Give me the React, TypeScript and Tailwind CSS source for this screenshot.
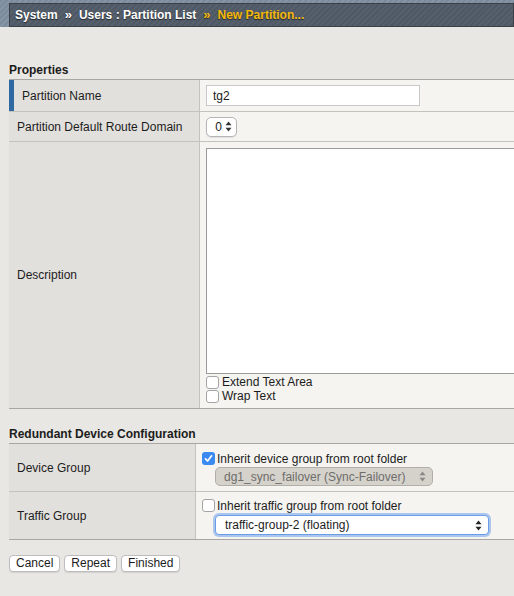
import React from "react";

const font = { fontFamily: '"Liberation Sans", Arial, Helvetica, sans-serif' };

function Arrows({ className = "" }: { className?: string }) {
  return (
    <svg width="7" height="11" viewBox="0 0 7 11" className={className}>
      <path d="M3.5 0.5 L6.5 4.3 L0.5 4.3 Z" fill="currentColor" />
      <path d="M3.5 10.5 L6.5 6.7 L0.5 6.7 Z" fill="currentColor" />
    </svg>
  );
}

function Check({ checked }: { checked?: boolean }) {
  if (checked) {
    return (
      <span className="flex h-[13px] w-[13px] shrink-0 items-center justify-center rounded-[3px] bg-[#3b8af2]">
        <svg width="9" height="9" viewBox="0 0 9 9">
          <path d="M1.5 4.8 L3.6 7 L7.6 1.8" stroke="white" strokeWidth="1.7" fill="none" strokeLinecap="round" strokeLinejoin="round" />
        </svg>
      </span>
    );
  }
  return <span className="h-[13px] w-[13px] shrink-0 rounded-[3px] border border-[#a5a5a5] bg-white" />;
}

function Header() {
  return (
    <div className="pl-[9px] pt-[3px] bg-[#7b8b9c] bg-[repeating-linear-gradient(135deg,#7b8b9c_0px,#7b8b9c_2px,#8595a6_2px,#8595a6_4px)]">
      <div className="flex h-[24px] items-center gap-[7px] border border-[#3a4048] bg-[#4f5965] bg-[repeating-linear-gradient(135deg,#4f5965_0px,#4f5965_2px,#56606c_2px,#56606c_4px)] pl-[5px] text-[12px] font-bold text-white [text-shadow:0_1px_1px_rgba(0,0,0,0.6)]">
        <span>System</span>
        <span className="text-[13px]">»</span>
        <span>Users : Partition List</span>
        <span className="text-[13px] text-[#f5b90a]">»</span>
        <span className="text-[#f5b90a]">New Partition...</span>
      </div>
    </div>
  );
}

export default function App() {
  return (
    <div style={font} className="h-[596px] w-[514px] overflow-hidden bg-[#e8e7e3] text-[12px] text-[#1c1c1c]">
      <Header />

      <div className="pl-[9px]">
        {/* Properties */}
        <h2 className="mt-[35px] h-[17px] text-[12px] font-bold leading-[17px]">Properties</h2>
        <div className="w-[560px] border-y border-[#a8a7a3]">
          <div className="grid h-[32px] grid-cols-[191px_1fr] border-b border-[#c4c2bd]">
            <div className="flex items-center border-r border-[#c4c2bd] bg-[#e2e0dc]">
              <span className="h-full w-[5px] bg-[#2e6aa1]" />
              <span className="pl-[8px] text-[12px]">Partition Name</span>
            </div>
            <div className="flex items-center bg-[#f5f4f1] pl-[6px]">
              <div className="flex h-[21px] w-[214px] items-center border border-[#c8c8c8] bg-white pl-[6px] text-[12px]">tg2</div>
            </div>
          </div>
          <div className="grid h-[30px] grid-cols-[191px_1fr] border-b border-[#c4c2bd]">
            <div className="flex items-center border-r border-[#c4c2bd] bg-[#e2e0dc] pl-[8px]">
              Partition Default Route Domain
            </div>
            <div className="flex items-center bg-[#f5f4f1] pl-[6px]">
              <div className="flex h-[20px] w-[31px] items-center justify-end gap-[3px] rounded-[5px] border border-[#b5b5b5] bg-white pr-[4px] shadow-[0_1px_1px_rgba(0,0,0,0.08)]">
                <span>0</span>
                <Arrows className="text-[#333]" />
              </div>
            </div>
          </div>
          <div className="grid h-[266px] grid-cols-[191px_1fr]">
            <div className="flex items-center border-r border-[#c4c2bd] bg-[#e2e0dc] pl-[8px]">Description</div>
            <div className="flex flex-col bg-[#f5f4f1] pl-[6px] pt-[6px]">
              <div className="h-[226px] w-full border border-[#9a9a9a] bg-white" />
              <label className="mt-[1px] flex h-[14px] items-center gap-[3px]">
                <Check />
                <span>Extend Text Area</span>
              </label>
              <label className="flex h-[14px] items-center gap-[3px]">
                <Check />
                <span>Wrap Text</span>
              </label>
            </div>
          </div>
        </div>

        {/* Redundant Device Configuration */}
        <h2 className="mt-[17px] h-[17px] text-[12px] font-bold leading-[17px]">Redundant Device Configuration</h2>
        <div className="w-[560px] border-y border-[#a8a7a3]">
          <div className="grid h-[48px] grid-cols-[187px_1fr] border-b border-[#c4c2bd]">
            <div className="flex items-center border-r border-[#c4c2bd] bg-[#e2e0dc] pl-[8px]">Device Group</div>
            <div className="flex flex-col bg-[#f5f4f1] pl-[6px] pt-[8px]">
              <label className="flex h-[13px] items-center gap-[2px]">
                <Check checked />
                <span>Inherit device group from root folder</span>
              </label>
              <div className="ml-[13px] mt-[2px] flex h-[19px] w-[218px] items-center justify-between rounded-[5px] border border-[#b2afa8] bg-[#d5d2cc] pl-[8px] pr-[6px] text-[#6e6d6a]">
                <span>dg1_sync_failover (Sync-Failover)</span>
                <Arrows className="text-[#8a8885]" />
              </div>
            </div>
          </div>
          <div className="grid h-[47px] grid-cols-[187px_1fr]">
            <div className="flex items-center border-r border-[#c4c2bd] bg-[#e2e0dc] pl-[8px]">Traffic Group</div>
            <div className="flex flex-col bg-[#f5f4f1] pl-[6px] pt-[7px]">
              <label className="flex h-[13px] items-center gap-[2px]">
                <Check />
                <span>Inherit traffic group from root folder</span>
              </label>
              <div className="ml-[13px] mt-[3px] flex h-[20px] w-[274px] items-center justify-between rounded-[4px] border border-[#6a9de6] bg-white pl-[9px] pr-[6px] shadow-[0_0_0_2px_rgba(110,160,235,0.55)]">
                <span>traffic-group-2 (floating)</span>
                <Arrows className="text-[#222]" />
              </div>
            </div>
          </div>
        </div>

        {/* Buttons */}
        <div className="mt-[15px] flex gap-[4px]">
          {["Cancel", "Repeat", "Finished"].map((b) => (
            <button
              key={b}
              className="h-[17px] rounded-[4px] border border-[#bdbdbd] bg-white px-[6px] text-[12px] leading-[15px] shadow-[0_1px_1px_rgba(0,0,0,0.1)]"
            >
              {b}
            </button>
          ))}
        </div>
      </div>
    </div>
  );
}
